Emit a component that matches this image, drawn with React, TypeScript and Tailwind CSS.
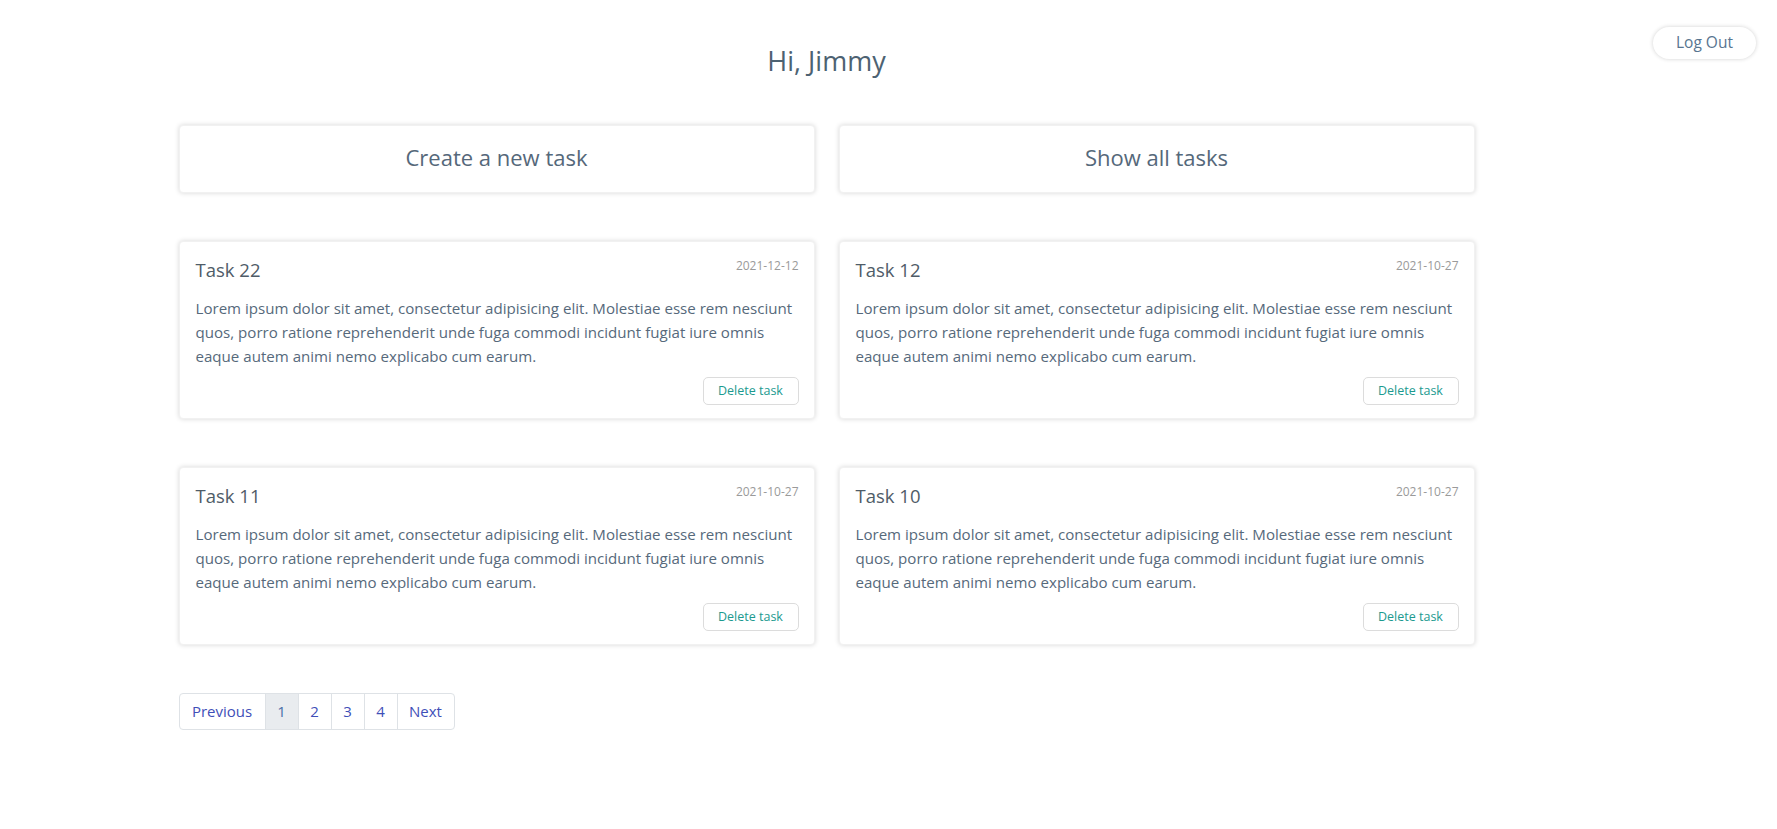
const lorem =
  "Lorem ipsum dolor sit amet, consectetur adipisicing elit. Molestiae esse rem nesciunt quos, porro ratione reprehenderit unde fuga commodi incidunt fugiat iure omnis eaque autem animi nemo explicabo cum earum.";

const tasks = [
  { id: 22, title: "Task 22", date: "2021-12-12" },
  { id: 12, title: "Task 12", date: "2021-10-27" },
  { id: 11, title: "Task 11", date: "2021-10-27" },
  { id: 10, title: "Task 10", date: "2021-10-27" },
];

const pages = ["1", "2", "3", "4"];

function TaskCard({ title, date }: { title: string; date: string }) {
  return (
    <div className="bg-white rounded-[4px] shadow-[0_0_5px_rgba(0,0,0,0.16)] border border-[#f1f1f1] pl-4 pr-[15px] pt-4 pb-[13px]">
      <div className="flex items-start justify-between">
        <h5 className="text-[18.5px] leading-[24px] text-[#4f5c68]">{title}</h5>
        <span className="text-[12px] leading-[16px] text-[#9a9a9a]">{date}</span>
      </div>
      <p className="mt-[14px] text-[15.1px] leading-[24px] text-[#56697b]">{lorem}</p>
      <div className="mt-[9px] flex justify-end">
        <button className="w-[96px] h-[28px] rounded-[5px] border border-[#dcdcdc] bg-white text-[12.5px] text-[#1c9a8f]">
          Delete task
        </button>
      </div>
    </div>
  );
}

export default function App() {
  return (
    <div className="flex min-h-screen bg-white font-['Segoe_UI','Open_Sans',sans-serif]">
      {/* Main */}
      <main className="flex-1 pt-[44px]">
        <h1 className="text-center text-[27px] leading-[34px] text-[#4d6272]">Hi, Jimmy</h1>

        <div className="mx-auto mt-[47px] max-w-[1320px] px-3">
          {/* Actions */}
          <div className="grid grid-cols-2 gap-x-6">
            <div className="flex h-[68px] items-center justify-center pb-[4px] rounded-[4px] bg-white shadow-[0_0_5px_rgba(0,0,0,0.16)] border border-[#f1f1f1] text-[22px] text-[#55687a] cursor-pointer">
              Create a new task
            </div>
            <div className="flex h-[68px] items-center justify-center pb-[4px] rounded-[4px] bg-white shadow-[0_0_5px_rgba(0,0,0,0.16)] border border-[#f1f1f1] text-[22px] text-[#55687a] cursor-pointer">
              Show all tasks
            </div>
          </div>

          {/* Tasks */}
          <div className="mt-12 grid grid-cols-2 gap-x-6 gap-y-12">
            {tasks.map((t) => (
              <TaskCard key={t.id} title={t.title} date={t.date} />
            ))}
          </div>

          {/* Pagination */}
          <nav className="mt-12 flex">
            <ul className="flex overflow-hidden rounded-[4px] border border-[#dee2e6] text-[15px] text-[#3f4fb8]">
              <li className="flex h-[35px] w-[85px] items-center justify-center">Previous</li>
              {pages.map((p) => (
                <li
                  key={p}
                  className={
                    p === "1"
                      ? "flex h-[35px] w-[33px] items-center justify-center border-l border-[#dee2e6] bg-[#e9ecef] text-[#4a6fa8]"
                      : "flex h-[35px] w-[33px] items-center justify-center border-l border-[#dee2e6]"
                  }
                >
                  {p}
                </li>
              ))}
              <li className="flex h-[35px] w-[57px] items-center justify-center border-l border-[#dee2e6]">Next</li>
            </ul>
          </nav>
        </div>
      </main>

      {/* Side */}
      <aside className="w-[124px] pt-[27px] pr-[21px] flex justify-end items-start">
        <button className="h-[32px] w-[105px] rounded-full bg-white shadow-[0_0_4px_rgba(0,0,0,0.18)] text-[15.5px] text-[#587590]">
          Log Out
        </button>
      </aside>
    </div>
  );
}
